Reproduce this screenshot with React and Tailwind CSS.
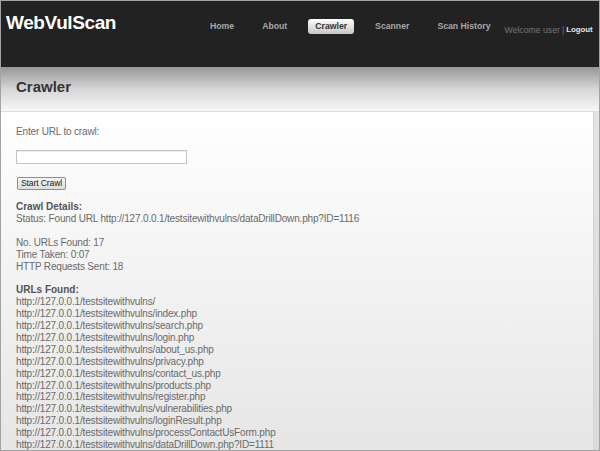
import React from "react";

const urls = [
  "http://127.0.0.1/testsitewithvulns/",
  "http://127.0.0.1/testsitewithvulns/index.php",
  "http://127.0.0.1/testsitewithvulns/search.php",
  "http://127.0.0.1/testsitewithvulns/login.php",
  "http://127.0.0.1/testsitewithvulns/about_us.php",
  "http://127.0.0.1/testsitewithvulns/privacy.php",
  "http://127.0.0.1/testsitewithvulns/contact_us.php",
  "http://127.0.0.1/testsitewithvulns/products.php",
  "http://127.0.0.1/testsitewithvulns/register.php",
  "http://127.0.0.1/testsitewithvulns/vulnerabilities.php",
  "http://127.0.0.1/testsitewithvulns/loginResult.php",
  "http://127.0.0.1/testsitewithvulns/processContactUsForm.php",
  "http://127.0.0.1/testsitewithvulns/dataDrillDown.php?ID=1111",
];

export default function App() {
  return (
    <div
      className="w-[600px] h-[451px] overflow-hidden border border-[#a3a3a3] flex flex-col bg-white"
      style={{ fontFamily: '"Liberation Sans", Arial, sans-serif' }}
    >
      {/* Header */}
      <div className="h-[66px] shrink-0 bg-[#222222] flex items-start">
        <div className="w-[202px] pl-[5px] pt-[11px] text-white font-bold text-[19px] leading-[22px] tracking-[-0.4px]">
          WebVulScan
        </div>
        <nav className="flex gap-[14px] mt-[18px] text-[8.7px] font-bold">
          <a className="h-[15px] px-[7px] flex items-center text-[#a8a8a8]">Home</a>
          <a className="h-[15px] px-[7px] flex items-center text-[#a8a8a8]">About</a>
          <a className="h-[15px] px-[7px] flex items-center text-[#333] rounded-[3px] bg-linear-to-b from-white to-[#c6c6c6]">
            Crawler
          </a>
          <a className="h-[15px] px-[7px] flex items-center text-[#a8a8a8]">Scanner</a>
          <a className="h-[15px] px-[7px] flex items-center text-[#a8a8a8]">Scan History</a>
        </nav>
        <div className="ml-[7px] mt-[24px] flex items-center leading-[10px] whitespace-nowrap">
          <span className="text-[8.7px] text-[#737373]">Welcome user</span>
          <span className="text-[8.7px] text-[#737373] mx-[2px]">|</span>
          <span className="text-[7.8px] font-bold text-[#e6e6e6]">Logout</span>
        </div>
      </div>

      {/* Title bar */}
      <div className="h-[45px] shrink-0 bg-linear-to-b from-[#979797] via-[#d6d6d6] to-[#f7f7f7] border-b border-[#dcdcdc] pl-[15px] pt-[11px]">
        <h1 className="text-[15px] leading-[18px] font-bold text-[#333]">Crawler</h1>
      </div>

      {/* Content */}
      <div className="flex-1 flex min-h-0">
        <div className="flex-1 bg-linear-to-b from-white to-[#e6e6e6] pl-[15px] pt-[14px] text-[10px] text-[#6a6a6a] tracking-[-0.17px]">
          <div className="leading-[12px]">Enter URL to crawl:</div>
          <div className="mt-[12px] w-[171px] h-[14px] bg-white border border-[#c4c4c4] shadow-[inset_0_1px_1px_rgba(0,0,0,0.08)]" />
          <button className="mt-[13px] ml-[1px] h-[13px] w-[49px] flex items-center justify-center rounded-[2px] border border-[#8f8f8f] bg-linear-to-b from-[#f6f6f6] to-[#dedede] text-[8.5px] font-normal text-[#222] tracking-[-0.1px] leading-none">
            Start Crawl
          </button>
          <div className="mt-[11px] leading-[11.9px]">
            <div className="font-bold text-[#555] tracking-normal">Crawl Details:</div>
            <div>Status: Found URL http://127.0.0.1/testsitewithvulns/dataDrillDown.php?ID=1116</div>
            <div className="h-[11.9px]" />
            <div>No. URLs Found: 17</div>
            <div>Time Taken: 0:07</div>
            <div>HTTP Requests Sent: 18</div>
            <div className="h-[11.9px]" />
            <div className="font-bold text-[#555] tracking-normal">URLs Found:</div>
            {urls.map((u) => (
              <div key={u} className="whitespace-nowrap">{u}</div>
            ))}
          </div>
        </div>
        <div className="w-[6px] shrink-0 bg-linear-to-b from-[#e4e4e4] to-[#dadada] border-l border-[#d4d4d4]" />
      </div>
    </div>
  );
}
